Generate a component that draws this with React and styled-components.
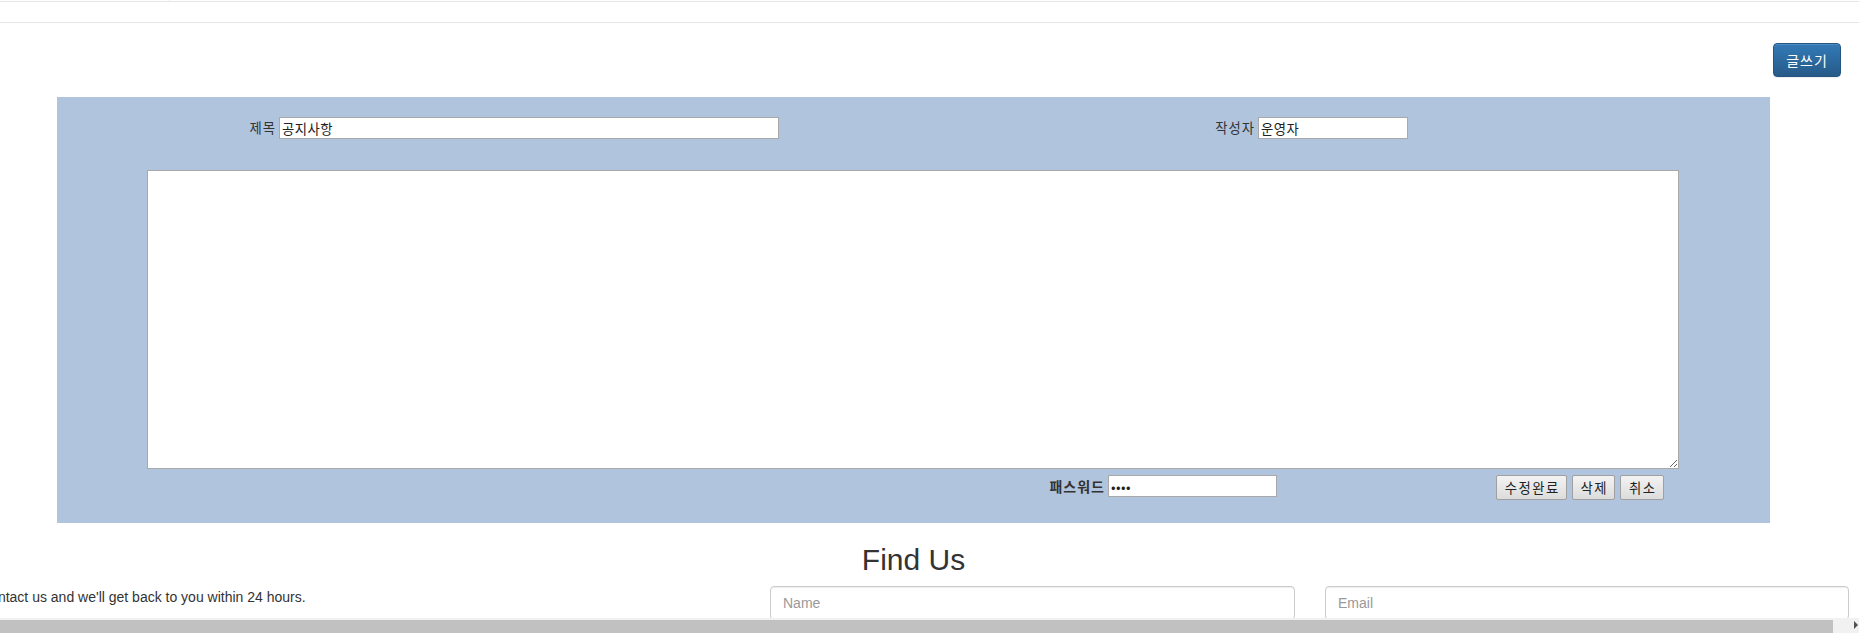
import React from "react";
import styled, { createGlobalStyle } from "styled-components";

const GlobalStyle = createGlobalStyle`
  html, body {
    margin: 0;
    padding: 0;
    overflow: hidden;
    background: #fff;
  }
  body {
    font-family: "Liberation Sans", Arial, "Noto Sans CJK KR", sans-serif;
    font-size: 14px;
    line-height: 1.42857;
    color: #333;
  }
  * {
    box-sizing: border-box;
  }
`;

const Page = styled.div`
  width: 1859px;
  height: 633px;
  position: relative;
  overflow: hidden;
`;

const NavStrip = styled.div`
  height: 2px;
  border-bottom: 1px solid #e7e7e7;
  display: flex;
`;

const NavCell = styled.div`
  width: 170px;
  height: 1px;
  border-right: 1px solid #e7e7e7;
`;

const NavBar = styled.div`
  height: 21px;
  border-bottom: 1px solid #e7e7e7;
`;

const Toolbar = styled.div`
  display: flex;
  justify-content: flex-end;
  padding: 20px 18px 20px 0;
`;

const PrimaryButton = styled.button`
  width: 68px;
  height: 34px;
  border: 1px solid #245580;
  border-radius: 4px;
  background: linear-gradient(to bottom, #337ab7 0%, #265a88 100%);
  color: #fff;
  font-family: "Noto Sans CJK KR", "Liberation Sans", sans-serif;
  font-size: 14px;
  letter-spacing: 1px;
  padding: 0;
  box-shadow: inset 0 1px 0 rgba(255, 255, 255, 0.15), 0 1px 1px rgba(0, 0, 0, 0.075);
`;

const Panel = styled.form`
  margin-left: 57px;
  width: 1713px;
  height: 426px;
  background: #b0c4de;
  padding-top: 20px;
  display: flex;
  flex-direction: column;
`;

const TitleRow = styled.div`
  display: grid;
  grid-template-columns: 222px 500px 479px 150px 1fr;
  align-items: center;
  height: 22px;
`;

const Label = styled.label`
  justify-self: end;
  padding-right: 3px;
  font-family: "Noto Sans CJK KR", "Liberation Sans", sans-serif;
  font-size: ${(p) => (p.$strong ? "14px" : "13.33px")};
  font-weight: ${(p) => (p.$strong ? 700 : 400)};
  letter-spacing: 1px;
  color: #333;
  line-height: 22px;
`;

const TextInput = styled.input`
  height: 22px;
  width: 100%;
  border: 1px solid #a9a9a9;
  padding: 1px 2px;
  font-family: "Noto Sans CJK KR", "Liberation Sans", sans-serif;
  font-size: 13.33px;
  letter-spacing: 0.5px;
  color: #222;
  background: #fff;
  outline: none;
`;

const ContentArea = styled.textarea`
  margin: 31px 0 0 90px;
  width: 1532px;
  height: 299px;
  border: 1px solid #a9a9a9;
  background: #fff;
  resize: both;
  font-family: "Liberation Mono", monospace;
  font-size: 13.33px;
  outline: none;
`;

const ActionRow = styled.div`
  display: grid;
  grid-template-columns: 1051px 169px 219px auto;
  align-items: start;
  margin-top: 6px;
`;

const ButtonGroup = styled.div`
  display: flex;
  gap: 5px;
`;

const PlainButton = styled.button`
  width: ${(p) => p.$width}px;
  height: 25px;
  padding: 0;
  border: 1px solid #a0a0a0;
  border-radius: 2px;
  background: linear-gradient(to bottom, #f3f3f3 0%, #dcdcdc 100%);
  font-family: "Noto Sans CJK KR", "Liberation Sans", sans-serif;
  font-size: 13.33px;
  letter-spacing: 1.5px;
  text-indent: 1.5px;
  color: #222;
`;

const Heading = styled.h2`
  margin: 20px 0 10px;
  padding-right: 32px;
  text-align: center;
  font-size: 30px;
  font-weight: 500;
  line-height: 1.1;
  color: #333;
`;

const ContactRow = styled.div`
  display: grid;
  grid-template-columns: 1fr 525px 524px;
  column-gap: 30px;
  padding-right: 10px;
`;

const ContactText = styled.p`
  margin: 0 0 0 -20px;
  font-size: 14px;
  line-height: 20px;
  padding-top: 1px;
  white-space: nowrap;
`;

const FormControl = styled.input`
  height: 34px;
  width: 100%;
  padding: 6px 12px;
  border: 1px solid #ccc;
  border-radius: 4px;
  font-family: "Liberation Sans", Arial, sans-serif;
  font-size: 14px;
  color: #555;
  box-shadow: inset 0 1px 1px rgba(0, 0, 0, 0.075);
  outline: none;
  &::placeholder {
    color: #999;
  }
`;

const Scrollbar = styled.div`
  position: fixed;
  left: 0;
  right: 0;
  bottom: 0;
  height: 15px;
  background: #f1f1f1;
  display: flex;
  align-items: flex-end;
`;

const Thumb = styled.div`
  width: 1833px;
  height: 13px;
  background: #c1c1c1;
`;

const Arrow = styled.div`
  margin: 0 0 4px 21px;
  width: 0;
  height: 0;
  border-top: 4px solid transparent;
  border-bottom: 4px solid transparent;
  border-left: 4px solid #505050;
`;

const actions = [
  { label: "수정완료", width: 71 },
  { label: "삭제", width: 43 },
  { label: "취소", width: 44 },
];

export default function App() {
  return (
    <Page>
      <GlobalStyle />
      <NavStrip>
        <NavCell />
      </NavStrip>
      <NavBar />
      <Toolbar>
        <PrimaryButton type="button">글쓰기</PrimaryButton>
      </Toolbar>
      <Panel onSubmit={(e) => e.preventDefault()}>
        <TitleRow>
          <Label>제목</Label>
          <TextInput type="text" defaultValue="공지사항" />
          <Label>작성자</Label>
          <TextInput type="text" defaultValue="운영자" />
        </TitleRow>
        <ContentArea />
        <ActionRow>
          <Label $strong>패스워드</Label>
          <TextInput type="password" defaultValue="1234" />
          <div />
          <ButtonGroup>
            {actions.map((a) => (
              <PlainButton key={a.label} type="button" $width={a.width}>
                {a.label}
              </PlainButton>
            ))}
          </ButtonGroup>
        </ActionRow>
      </Panel>
      <Heading>Find Us</Heading>
      <ContactRow>
        <ContactText>Contact us and we'll get back to you within 24 hours.</ContactText>
        <FormControl type="text" placeholder="Name" />
        <FormControl type="email" placeholder="Email" />
      </ContactRow>
      <Scrollbar>
        <Thumb />
        <Arrow />
      </Scrollbar>
    </Page>
  );
}
